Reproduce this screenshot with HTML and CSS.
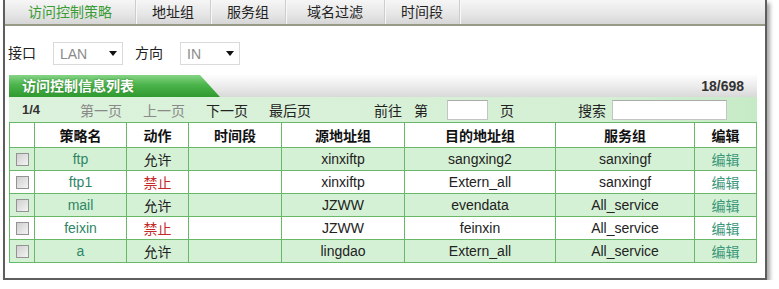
FILE: index.html
```html
<!DOCTYPE html>
<html lang="zh-CN">
<head>
    <meta charset="UTF-8">
    <title>访问控制策略</title>
    <link rel="stylesheet" href="styles.css">
</head>
<body>
    <div class="panel">
        <ul class="tabs">
            <li class="active">访问控制策略</li>
            <li>地址组</li>
            <li>服务组</li>
            <li class="wide">域名过滤</li>
            <li>时间段</li>
        </ul>

        <div class="content">
            <div class="filters">
                <span class="label">接口</span>
                <div class="select select-if">
                    <span>LAN</span>
                    <svg width="8" height="5" viewBox="0 0 8 5"><path d="M0 0H8L4 5Z" fill="#111"/></svg>
                </div>
                <span class="label">方向</span>
                <div class="select select-dir">
                    <span>IN</span>
                    <svg width="8" height="5" viewBox="0 0 8 5"><path d="M0 0H8L4 5Z" fill="#111"/></svg>
                </div>
            </div>

            <div class="list-head">
                <div class="caption">访问控制信息列表</div>
                <div class="count">18/698</div>
            </div>

            <div class="pager">
                <span class="pages">1/4</span>
                <div class="pager-links">
                    <span class="off">第一页</span>
                    <span class="off">上一页</span>
                    <span>下一页</span>
                    <span>最后页</span>
                </div>
                <div class="goto">
                    <span>前往</span>
                    <span class="goto-di">第</span>
                    <input type="text" class="page-input">
                    <span class="goto-ye">页</span>
                </div>
                <div class="search">
                    <span>搜索</span>
                    <input type="text" class="search-input">
                </div>
            </div>

            <table class="grid">
                <colgroup>
                    <col style="width:25px">
                    <col style="width:92px">
                    <col style="width:62px">
                    <col style="width:93px">
                    <col style="width:123px">
                    <col style="width:151px">
                    <col style="width:139px">
                    <col style="width:62px">
                </colgroup>
                <thead>
                    <tr>
                        <th></th>
                        <th>策略名</th>
                        <th>动作</th>
                        <th>时间段</th>
                        <th>源地址组</th>
                        <th>目的地址组</th>
                        <th>服务组</th>
                        <th>编辑</th>
                    </tr>
                </thead>
                <tbody>
                    <tr class="odd">
                        <td><input type="checkbox"></td>
                        <td class="name">ftp</td>
                        <td>允许</td>
                        <td></td>
                        <td>xinxiftp</td>
                        <td>sangxing2</td>
                        <td>sanxingf</td>
                        <td class="edit">编辑</td>
                    </tr>
                    <tr>
                        <td><input type="checkbox"></td>
                        <td class="name">ftp1</td>
                        <td class="deny">禁止</td>
                        <td></td>
                        <td>xinxiftp</td>
                        <td>Extern_all</td>
                        <td>sanxingf</td>
                        <td class="edit">编辑</td>
                    </tr>
                    <tr class="odd">
                        <td><input type="checkbox"></td>
                        <td class="name">mail</td>
                        <td>允许</td>
                        <td></td>
                        <td>JZWW</td>
                        <td>evendata</td>
                        <td>All_service</td>
                        <td class="edit">编辑</td>
                    </tr>
                    <tr>
                        <td><input type="checkbox"></td>
                        <td class="name">feixin</td>
                        <td class="deny">禁止</td>
                        <td></td>
                        <td>JZWW</td>
                        <td>feinxin</td>
                        <td>All_service</td>
                        <td class="edit">编辑</td>
                    </tr>
                    <tr class="odd">
                        <td><input type="checkbox"></td>
                        <td class="name">a</td>
                        <td>允许</td>
                        <td></td>
                        <td>lingdao</td>
                        <td>Extern_all</td>
                        <td>All_service</td>
                        <td class="edit">编辑</td>
                    </tr>
                </tbody>
            </table>
        </div>
    </div>
</body>
</html>
```

FILE: styles.css
```css
body {
    margin: 0;
    font-family: "Liberation Sans", "Noto Sans CJK SC", sans-serif;
    font-size: 14px;
    color: #222;
    background-color: #fff;
}
.panel {
    box-sizing: border-box;
    width: 764px;
    height: 280px;
    margin-left: 3px;
    border: 2px solid #5e5e5e;
    border-top: none;
    box-shadow: 3px 3px 4px rgba(0,0,0,0.35);
    background-color: #fff;
}
.tabs {
    display: flex;
    margin: 0;
    padding: 0;
    list-style: none;
    height: 24px;
    background: linear-gradient(#f6f6f6, #e6e6e6 60%, #d6d6d6);
    border-bottom: 2px solid #979b85;
}
.tabs li {
    padding: 0 16px;
    line-height: 24px;
    text-align: center;
    color: #222;
    border-right: 1px solid #cdcdcd;
    box-shadow: 1px 0 0 #f8f8f8;
}
.tabs li.active {
    padding: 0 23px;
    color: #3a9c34;
}
.tabs li.wide {
    padding: 0 21px;
}
.content {
    padding: 16px 8px 0 4px;
}
.filters {
    display: flex;
    align-items: center;
    height: 23px;
    margin-left: -1px;
}
.label {
    line-height: 23px;
}
.select {
    box-sizing: border-box;
    display: flex;
    align-items: center;
    justify-content: space-between;
    height: 23px;
    padding: 0 5px 0 6px;
    border: 1px solid #dadada;
    color: #8a8a8a;
    font-size: 14px;
}
.select-if {
    width: 70px;
    margin: 0 12px 0 17px;
}
.select-dir {
    width: 60px;
    margin-left: 17px;
}
.list-head {
    display: flex;
    justify-content: space-between;
    align-items: center;
    height: 22px;
    margin-top: 10px;
    background: linear-gradient(#fdfdfd, #ececec 50%, #d9d9d9);
}
.caption {
    width: 198px;
    height: 22px;
    padding-left: 13px;
    line-height: 22px;
    color: #fff;
    font-weight: bold;
    text-shadow: 0 0 2px #2a7a2a;
    background: linear-gradient(#86d486, #4bb44b 45%, #2f9a2f);
    clip-path: polygon(0 0, 191px 0, 100% 100%, 0 100%);
}
.count {
    padding-right: 13px;
    font-weight: bold;
    color: #333;
}
.pager {
    display: flex;
    align-items: center;
    height: 25px;
    padding-left: 13px;
    background: linear-gradient(90deg, #dcf2dc, #d4efd4 80%, #c6eac6);
}
.pages {
    width: 58px;
    font-size: 13px;
    font-weight: bold;
    color: #333;
}
.pager-links {
    display: flex;
    gap: 21px;
    color: #222;
}
.pager-links .off {
    color: #8a8a8a;
}
.goto {
    display: flex;
    align-items: center;
    margin-left: 63px;
}
.goto-di {
    margin-left: 12px;
}
.goto-ye {
    margin-left: 12px;
}
.search {
    display: flex;
    align-items: center;
    margin-left: 64px;
}
.pager input {
    box-sizing: border-box;
    height: 20px;
    padding: 0 3px;
    border: 1px solid #c4c4c4;
    border-top-color: #aaa;
    background-color: #fff;
    font-size: 13px;
}
.page-input {
    width: 41px;
    margin-left: 19px;
}
.search-input {
    width: 115px;
    margin-left: 6px;
}
.grid {
    width: 748px;
    table-layout: fixed;
    border-collapse: collapse;
}
.grid th,
.grid td {
    padding: 0;
    border: 1px solid #68b868;
    text-align: center;
    white-space: nowrap;
}
.grid th {
    height: 24px;
    font-weight: bold;
    color: #111;
    background-color: #fff;
}
.grid td {
    height: 22px;
    color: #222;
}
.grid tr.odd td {
    background-color: #d5f1d5;
}
.grid td.name {
    color: #2f8666;
}
.grid td.deny {
    color: #c42a2a;
}
.grid td.edit {
    color: #3a977a;
}
.grid input[type="checkbox"] {
    appearance: none;
    display: block;
    width: 13px;
    height: 13px;
    margin: 0 auto;
    border: 1px solid #939393;
    background: linear-gradient(135deg, #cfcfcf, #f4f4f4);
}
```
